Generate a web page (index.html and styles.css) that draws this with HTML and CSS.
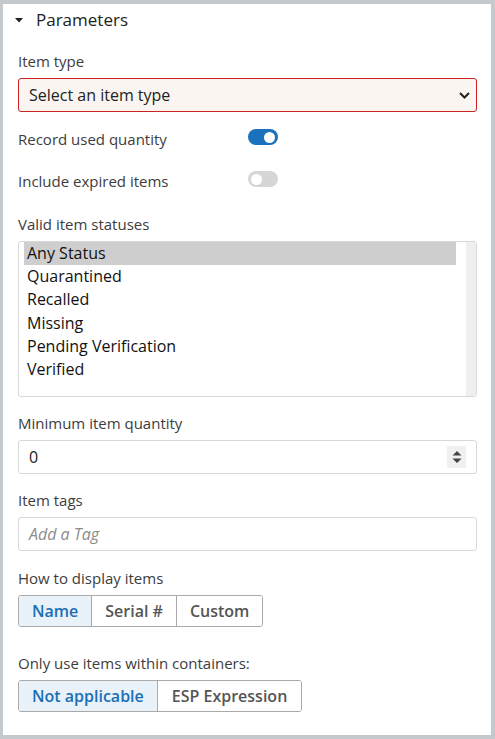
FILE: index.html
```html
<!DOCTYPE html>
<html lang="en">
<head>
<meta charset="utf-8">
<title>Parameters</title>
<link rel="stylesheet" href="styles.css">
</head>
<body>
<section class="panel">
  <header class="panel-head">
    <svg class="caret" width="8" height="5" viewBox="0 0 8 5"><path d="M0 0h8L4 4.5z" fill="#222"/></svg>
    <h2 class="panel-title">Parameters</h2>
  </header>

  <div class="field">
    <label class="label">Item type</label>
    <div class="select-wrap">
      <select class="select invalid"><option>Select an item type</option></select>
      <svg class="chevron" width="11" height="7" viewBox="0 0 11 7"><path d="M1 1l4.5 4.5L10 1" fill="none" stroke="#222" stroke-width="2"/></svg>
    </div>
  </div>

  <div class="toggle-row first">
    <span class="toggle-label">Record used quantity</span>
    <span class="toggle on"><span class="knob"></span></span>
  </div>
  <div class="toggle-row second">
    <span class="toggle-label">Include expired items</span>
    <span class="toggle"><span class="knob"></span></span>
  </div>

  <div class="field statuses">
    <label class="label">Valid item statuses</label>
    <div class="listbox">
      <ul class="options">
        <li class="option selected">Any Status</li>
        <li class="option">Quarantined</li>
        <li class="option">Recalled</li>
        <li class="option">Missing</li>
        <li class="option">Pending Verification</li>
        <li class="option">Verified</li>
      </ul>
      <div class="track"></div>
    </div>
  </div>

  <div class="field qty">
    <label class="label">Minimum item quantity</label>
    <div class="input number">
      <span class="value">0</span>
      <span class="spinner">
        <svg width="10" height="14" viewBox="0 0 10 14"><path d="M0.5 5.5L5 1l4.5 4.5z M0.5 8.5h9L5 13z" fill="#444"/></svg>
      </span>
    </div>
  </div>

  <div class="field tags">
    <label class="label">Item tags</label>
    <div class="input"><span class="placeholder">Add a Tag</span></div>
  </div>

  <div class="field display">
    <label class="label">How to display items</label>
    <div class="btn-group">
      <button class="seg active">Name</button>
      <button class="seg">Serial #</button>
      <button class="seg">Custom</button>
    </div>
  </div>

  <div class="field containers">
    <label class="label">Only use items within containers:</label>
    <div class="btn-group">
      <button class="seg active">Not applicable</button>
      <button class="seg wide">ESP Expression</button>
    </div>
  </div>
</section>
</body>
</html>
```

FILE: styles.css
```css
* { box-sizing: border-box; }
html, body { height: 100%; }
body {
  margin: 0;
  padding: 4px 4px 4px 3px;
  background: #c4c9ce;
  font-family: "Open Sans", "Noto Sans", sans-serif;
  color: #3d3d3d;
}
.panel {
  background: #fff;
  height: 731px;
  padding: 0 14px 0 15px;
  display: flex;
  flex-direction: column;
}
.panel-head {
  height: 32px;
  display: flex;
  align-items: center;
  margin-bottom: 15px;
}
.caret { margin: 1px 0 0 -3px; flex: none; }
.panel-title {
  margin: 0 0 0 13px;
  font-size: 17px;
  font-weight: 400;
  color: #222;
  line-height: 24px;
}
.field { display: flex; flex-direction: column; }
.label {
  font-size: 15px;
  line-height: 20px;
  margin-bottom: 7px;
  color: #3d3d3d;
}
.select-wrap { position: relative; }
.select {
  appearance: none;
  -webkit-appearance: none;
  width: 100%;
  height: 34px;
  margin: 0;
  padding: 0 30px 0 10px;
  font: 16px "Open Sans", "Noto Sans", sans-serif;
  color: #222;
  background: #fff;
  border: 1px solid #ccc;
  border-radius: 3px;
  outline: none;
}
.select.invalid { border-color: #cc2222; background: #fbf5f2; }
.chevron { position: absolute; right: 7px; top: 14px; pointer-events: none; }

.toggle-row {
  display: grid;
  grid-template-columns: 230px auto;
  align-items: start;
  justify-content: start;
  font-size: 15px;
}
.toggle-label { line-height: 20px; padding-top: 2px; }
.toggle-row.first { margin-top: 15px; }
.toggle-row.second { margin-top: 20px; }
.toggle {
  margin-top: 2px;
  width: 30px;
  height: 16px;
  border-radius: 8px;
  background: #d6d6d6;
  display: flex;
  align-items: center;
  padding: 0 3px;
}
.toggle.on { background: #1a72bd; justify-content: flex-end; }
.knob { width: 11px; height: 11px; border-radius: 50%; background: #fff; }

.statuses { margin-top: 23px; }
.listbox {
  height: 156px;
  border: 1px solid #d8d8d8;
  border-radius: 3px;
  display: flex;
}
.options {
  list-style: none;
  margin: 0;
  padding: 0 10px 0 5px;
  flex: 1;
}
.option {
  height: 23.2px;
  line-height: 23.2px;
  padding-left: 3px;
  font-size: 16px;
  color: #111;
}
.option.selected { background: #cecece; }
.track { width: 10px; background: #efefef; }

.qty { margin-top: 16px; }
.tags { margin-top: 16px; }
.input {
  height: 34px;
  border: 1px solid #d8d8d8;
  border-radius: 3px;
  display: flex;
  align-items: center;
  padding: 0 10px;
  font-size: 16px;
  color: #222;
}
.number { justify-content: space-between; }
.spinner {
  width: 19px;
  height: 22px;
  background: #f0f0f0;
  display: flex;
  align-items: center;
  justify-content: center;
}
.placeholder { font-style: italic; color: #8c8c8c; }

.display { margin-top: 17px; }
.containers { margin-top: 26px; }
.btn-group {
  display: flex;
  align-self: flex-start;
  border: 1px solid #a9a9a9;
  border-radius: 3px;
  overflow: hidden;
  height: 32px;
}
.seg {
  margin: 0;
  border: 0;
  border-left: 1px solid #a9a9a9;
  background: #fff;
  padding: 0 13px;
  font: 600 16px "Open Sans", "Noto Sans", sans-serif;
  color: #555;
}
.seg:first-child { border-left: 0; }
.seg.wide { padding: 0 14px; }
.seg.active { background: #e9f1f9; color: #1a6fb5; }
```
